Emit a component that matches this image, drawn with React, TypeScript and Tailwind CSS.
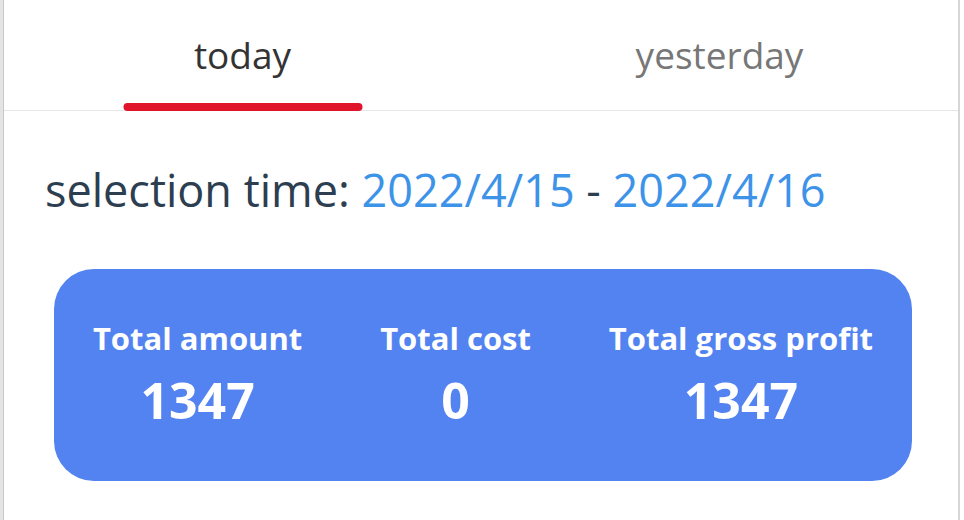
import React, { useState } from 'react';

const tabs = ['today', 'yesterday'];

const stats = [
  { label: 'Total amount', value: 1347 },
  { label: 'Total cost', value: 0 },
  { label: 'Total gross profit', value: 1347 },
];

const App: React.FC = () => {
  const [active, setActive] = useState(0);

  return (
    <div className="flex h-[520px] w-[964px] bg-white font-['Open_Sans',sans-serif]">
      {/* backdrop strip on the left */}
      <div className="w-[4px] shrink-0 border-r border-[#c8c8c8] bg-[#e4e4e4]" />

      <div className="flex w-[956px] shrink-0 flex-col border-r-2 border-[#d6d6d6] bg-white">
        <div className="flex h-[111px] border-b border-[#e6e6e6]">
          {tabs.map((tab, i) => (
            <button
              key={tab}
              onClick={() => setActive(i)}
              className="relative flex flex-1 items-center justify-center"
            >
              <span className={`text-[37px] ${active === i ? 'text-[#333333]' : 'text-[#777777]'}`}>{tab}</span>
              {active === i && (
                <span className="absolute bottom-[-1px] left-1/2 h-[8px] w-[239px] -translate-x-1/2 rounded-full bg-[#e0142a]" />
              )}
            </button>
          ))}
        </div>

        <div className="pl-[41px] pt-[56px] text-[45px] leading-none text-[#2c3e50]">
          selection time: <span className="text-[#3d93e8]">2022/4/15</span> - <span className="text-[#3d93e8]">2022/4/16</span>
        </div>

        <div className="ml-[50px] mt-[57px] flex h-[212px] w-[858px] items-center justify-around rounded-[40px] bg-[#5283f0] pb-[6px] text-white">
          {stats.map((s) => (
            <div key={s.label} className="flex flex-col items-center">
              <div className="text-[31px] font-bold leading-[40px]">{s.label}</div>
              <div className="mt-[16px] text-[50px] font-bold leading-[52px]">{s.value}</div>
            </div>
          ))}
        </div>
      </div>
    </div>
  );
};

export default App;
